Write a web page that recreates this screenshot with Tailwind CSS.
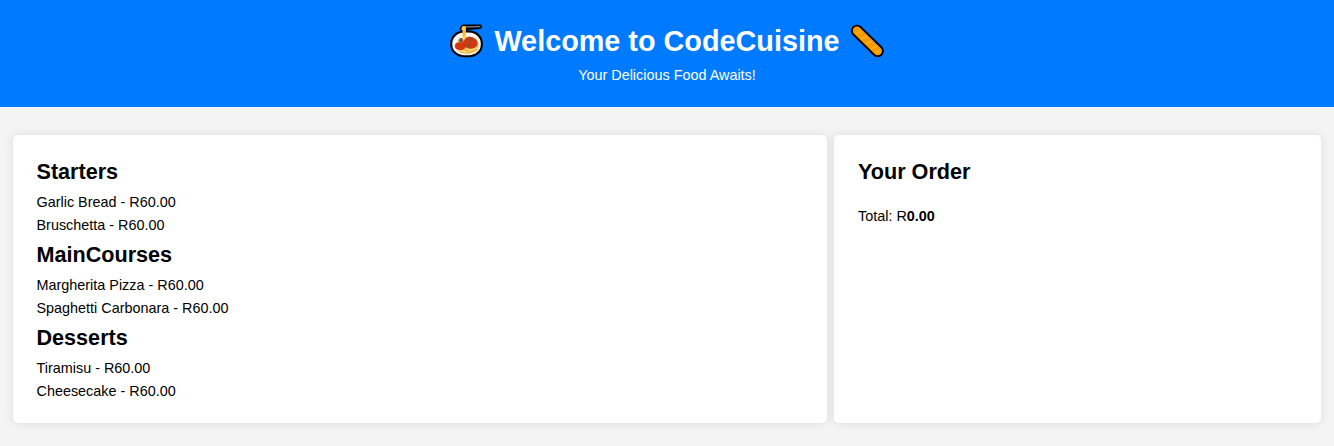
<!DOCTYPE html>
<html lang="en">
<head>
<meta charset="utf-8">
<title>CodeCuisine</title>
<script src="https://cdn.jsdelivr.net/npm/@tailwindcss/browser@4"></script>
</head>
<body class="min-h-screen bg-[#f4f4f4] text-[14.4px] leading-[23.04px] text-black font-['Liberation_Sans',Arial,sans-serif]">
<header class="flex h-[107px] flex-col items-center bg-[#007bff] pt-[18px] text-white">
  <h1 class="flex h-[46px] items-center text-[28.8px] font-bold leading-[46px]">
    <svg class="mr-[10px] h-[36px] w-[36px]" viewBox="0 0 36 36">
      <rect x="2.300" y="7.500" width="32.500" height="26.700" rx="13.500" ry="12.500" fill="#000"/>
      <path d="M13.500 2.500L15 1.500H32Q34 1.500 34 3.500T32 6L19.500 7V12H12.500V7L11.500 5.500Z" fill="#000"/>
      <rect x="4.300" y="9.500" width="28.500" height="22.700" rx="12" ry="10.800" fill="#f6f4f5"/>
      <path d="M18 4L32 3.500" stroke="#77777b" stroke-width="1.300" stroke-linecap="round"/>
      <path d="M13.500 4.500L15 3H17.500L18 6L17.500 15H14.500V7.500L13.500 6.500Z" fill="#ffc83d"/>
      <path d="M16 7V13" stroke="#e0a030" stroke-width=".6"/>
      <path d="M10 17C13 12.500 24 12 28 17C31 21 31 27 27 29C22 31 13 30 10 27C8 24 7.500 20 10 17Z" fill="#ffdb80"/>
      <path d="M9 27Q18 25 20 30M11 28Q18 33 28 27M28 16Q32 22 28 28M16 25Q22 31 28 26" stroke="#f3b43c" stroke-width="1.100" fill="none"/>
      <path d="M7 24C6 20 10 18.500 14 19.500C17 17.500 16 15 20 14C25 13 29.500 16.500 29.500 20.500C29.500 24 26 25.500 23 25.800C20 26 19 24 17.500 24.500C16 28 7.500 28 7 24Z" fill="#d43709"/>
      <circle cx="13" cy="17.300" r="2.200" fill="#805346"/>
      <circle cx="22.500" cy="17" r="2" fill="#805346"/>
      <circle cx="20.500" cy="22.500" r="1.900" fill="#805346"/>
    </svg>
    <span>Welcome to CodeCuisine</span>
    <svg class="ml-[10px] h-[36px] w-[36px]" viewBox="0 0 36 36">
      <path d="M7 7.800L27.700 28" stroke="#000" stroke-width="12.300" stroke-linecap="round"/>
      <path d="M7 7.800L27.700 28" stroke="#f39c00" stroke-width="8.500" stroke-linecap="round"/>
      <path d="M6 11L11 8.500M11 16L17 13M16 21L22 18M21 26L27 23M26 30L30 28" stroke="#ffb016" stroke-width="1.800"/>
    </svg>
  </h1>
  <p>Your Delicious Food Awaits!</p>
</header>
<main class="flex gap-[7px] px-[13px] pt-[28px]">
  <section class="h-[288px] w-[814px] rounded-[5px] bg-white px-[23.500px] pt-[18px] shadow-[0_0_10px_rgba(0,0,0,0.1)]">
    <h2 class="h-[37px] text-[21.6px] font-bold leading-[37px]">Starters</h2>
    <ul class="h-[46px] pt-px"><li>Garlic Bread - R60.00</li><li>Bruschetta - R60.00</li></ul>
    <h2 class="h-[37px] text-[21.6px] font-bold leading-[37px]">MainCourses</h2>
    <ul class="h-[46px] pt-px"><li>Margherita Pizza - R60.00</li><li>Spaghetti Carbonara - R60.00</li></ul>
    <h2 class="h-[37px] text-[21.6px] font-bold leading-[37px]">Desserts</h2>
    <ul class="h-[46px] pt-px"><li>Tiramisu - R60.00</li><li>Cheesecake - R60.00</li></ul>
  </section>
  <section class="h-[288px] w-[487px] rounded-[5px] bg-white px-[24px] pt-[18px] shadow-[0_0_10px_rgba(0,0,0,0.1)]">
    <h2 class="h-[37px] text-[21.6px] font-bold leading-[37px]">Your Order</h2>
    <p class="mt-[15px]">Total: R<strong>0.00</strong></p>
  </section>
</main>
</body>
</html>
